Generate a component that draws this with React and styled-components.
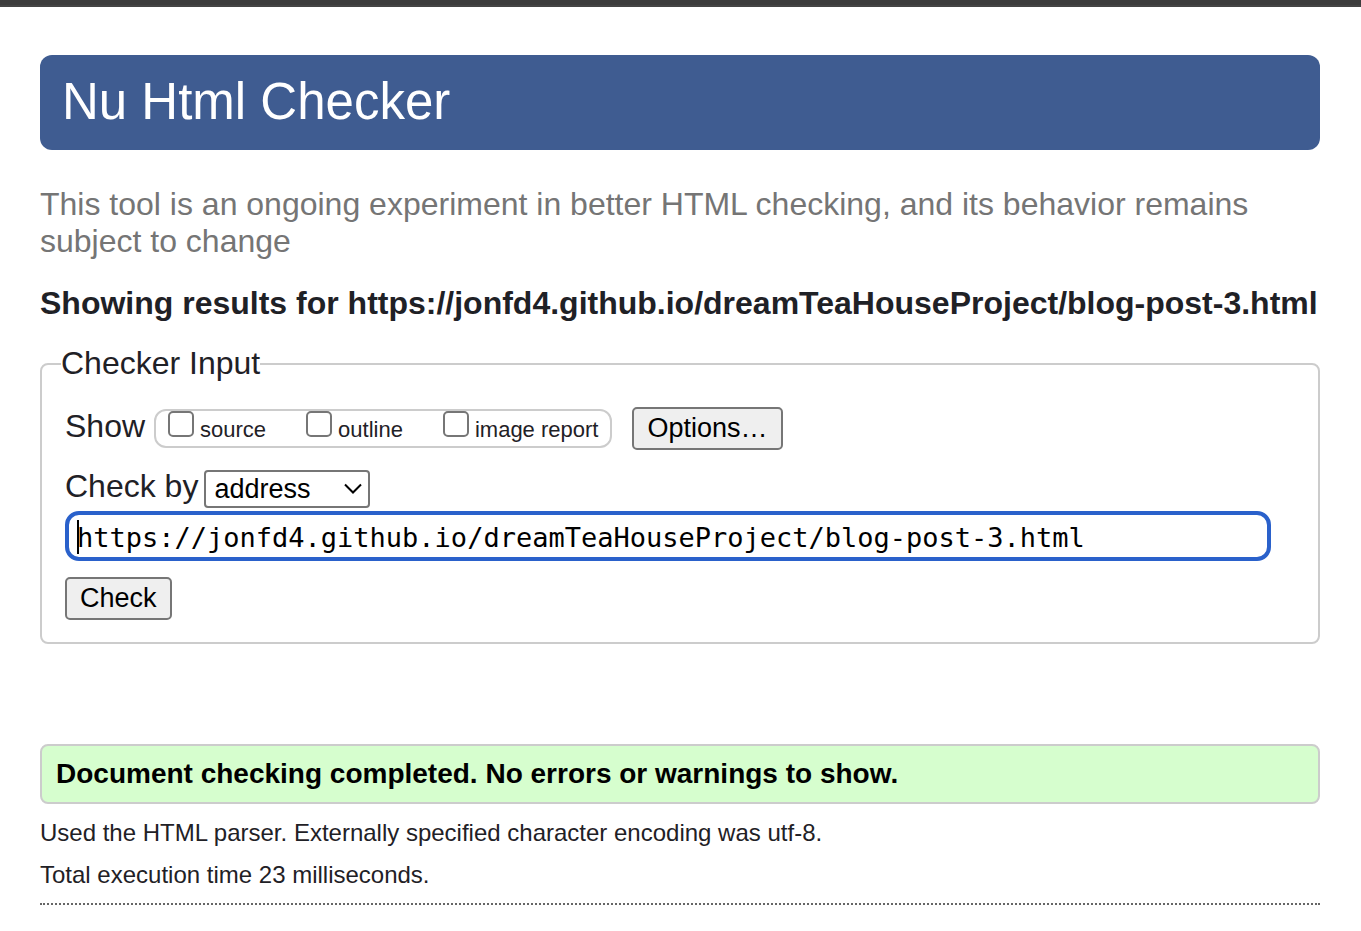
import React from "react";
import styled, { createGlobalStyle } from "styled-components";

const GlobalStyle = createGlobalStyle`
  *, *::before, *::after { box-sizing: border-box; }
  body {
    margin: 0;
    background: #fff;
    color: #1f2126;
    font-family: "Liberation Sans", Arial, Helvetica, sans-serif;
    font-size: 32px;
    line-height: 37px;
  }
  button, input, select { font-family: inherit; margin: 0; }
`;

const WindowEdge = styled.div`
  height: 7px;
  background: #3c3c3c;
  border-bottom: 2px solid #444;
`;

const Page = styled.div`
  padding: 48px 41px 24px 40px;
`;

const Title = styled.h1`
  margin: 0;
  padding: 17px 22px 18px;
  border-radius: 12px;
  background: #3f5c91;
  color: #fff;
  font-size: 51px;
  font-weight: 400;
  line-height: 60px;
`;

const Notice = styled.p`
  margin: 36px 0 0;
  color: #757575;
`;

const ResultsHeading = styled.h2`
  margin: 25px 0 0;
  font-size: 32px;
  font-weight: 700;
  white-space: nowrap;
`;

const CheckerFieldset = styled.fieldset`
  min-width: 0;
  margin: 23px 0 0;
  padding: 25px 47px 22px 23px;
  border: 2px solid #ccc;
  border-radius: 8px;
`;

const Legend = styled.legend`
  margin-left: -4px;
  padding: 0;
`;

const ShowRow = styled.div`
  display: flex;
  align-items: center;
  height: 43px;
`;

const RowLabel = styled.span`
  margin-right: 9px;
  padding-bottom: 4px;
`;

const OptionPill = styled.div`
  display: flex;
  gap: 40px;
  height: 39px;
  margin-right: 20px;
  padding: 0 12px;
  border: 2px solid #ccc;
  border-radius: 12px;
`;

const OptionLabel = styled.label`
  display: flex;
  gap: 6px;
  font-size: 22px;
`;

const Checkbox = styled.input`
  appearance: none;
  flex: none;
  width: 26px;
  height: 26px;
  border: 2px solid #767676;
  border-radius: 5px;
  background: #fff;
  &:checked { background: #2a61cb; }
`;

const Button = styled.button`
  display: block;
  height: 43px;
  padding: 0 13px 2px;
  border: 2px solid #767676;
  border-radius: 5px;
  background: #efefef;
  color: #000;
  font-size: 27px;
  line-height: 36px;
`;

const SourceRow = styled.div`
  display: flex;
  align-items: center;
  gap: 6px;
  height: 38px;
  margin-top: 19px;
  label { padding-bottom: 4px; }
`;

const SelectWrap = styled.div`
  position: relative;
  width: 166px;
  height: 38px;
  svg {
    position: absolute;
    top: 14px;
    right: 8px;
    pointer-events: none;
  }
`;

const Select = styled.select`
  appearance: none;
  width: 100%;
  height: 100%;
  padding: 0 8px;
  border: 2px solid #767676;
  border-radius: 4px;
  background: #fff;
  color: #000;
  font-size: 27px;
  line-height: 34px;
`;

const AddressWrap = styled.div`
  position: relative;
  margin: 4px 0 16px;
`;

const AddressInput = styled.input`
  display: block;
  width: 100%;
  height: 50px;
  padding: 2px 8px 0;
  border: 4px solid #2a61cb;
  border-radius: 14px;
  outline: none;
  background: #fff;
  color: #000;
  caret-color: transparent;
  && { font-family: "DejaVu Sans Mono", monospace; }
  font-size: 27px;
`;

const Caret = styled.span`
  position: absolute;
  top: 9px;
  left: 12px;
  width: 2px;
  height: 34px;
  background: #000;
`;

const Success = styled.p`
  margin: 100px 0 0;
  padding: 9px 14px 10px;
  border: 2px solid #ccc;
  border-radius: 8px;
  background: #d6fece;
  color: #000;
  font-size: 28px;
  font-weight: 700;
`;

const Details = styled.div`
  padding-bottom: 14px;
  border-bottom: 2px dotted #666;
  font-size: 24px;
  line-height: 28px;
  p { margin: 15px 0 0; }
  p + p { margin-top: 14px; }
`;

const OPTIONS = ["source", "outline", "image report"];
const ADDRESS = "https://jonfd4.github.io/dreamTeaHouseProject/blog-post-3.html";

export default function App() {
  return (
    <>
      <GlobalStyle />
      <WindowEdge />
      <Page>
        <Title>Nu Html Checker</Title>
        <Notice>
          This tool is an ongoing experiment in better HTML checking, and its behavior remains subject to change
        </Notice>
        <ResultsHeading>Showing results for {ADDRESS}</ResultsHeading>
        <form onSubmit={(e) => e.preventDefault()}>
          <CheckerFieldset>
            <Legend>Checker Input</Legend>
            <ShowRow>
              <RowLabel>Show</RowLabel>
              <OptionPill>
                {OPTIONS.map((name) => (
                  <OptionLabel key={name}>
                    <Checkbox type="checkbox" name={name} />
                    {name}
                  </OptionLabel>
                ))}
              </OptionPill>
              <Button type="button">Options…</Button>
            </ShowRow>
            <SourceRow>
              <label htmlFor="method">Check by</label>
              <SelectWrap>
                <Select id="method" defaultValue="address">
                  <option value="address">address</option>
                  <option value="upload">file upload</option>
                  <option value="text">text input</option>
                </Select>
                <svg width="18" height="12" viewBox="0 0 18 12" fill="none" stroke="#000" strokeWidth="2" aria-hidden="true">
                  <path d="M1 1.5l8 8 8-8" />
                </svg>
              </SelectWrap>
            </SourceRow>
            <AddressWrap>
              <AddressInput type="text" aria-label="Address" defaultValue={ADDRESS} spellCheck={false} />
              <Caret />
            </AddressWrap>
            <Button type="submit">Check</Button>
          </CheckerFieldset>
        </form>
        <Success>Document checking completed. No errors or warnings to show.</Success>
        <Details>
          <p>Used the HTML parser. Externally specified character encoding was utf-8.</p>
          <p>Total execution time 23 milliseconds.</p>
        </Details>
      </Page>
    </>
  );
}
